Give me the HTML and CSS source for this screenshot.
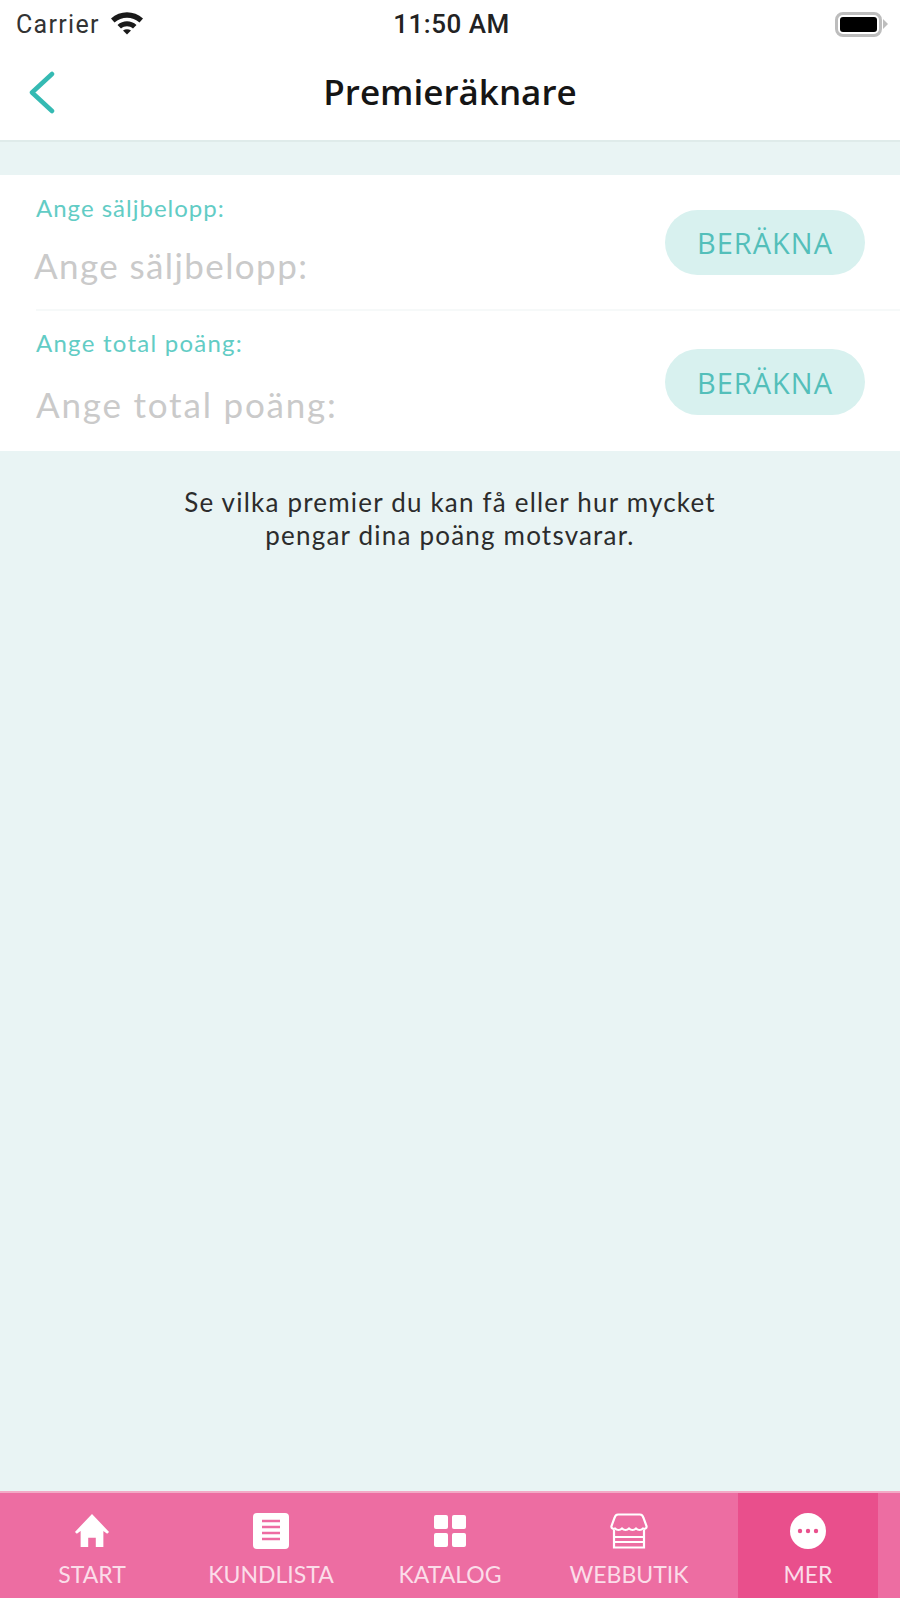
FILE: index.html
```html
<!DOCTYPE html>
<html lang="sv">
<head>
    <meta charset="UTF-8">
    <meta name="viewport" content="width=device-width, initial-scale=1.0">
    <title>Premieräknare</title>
    <link rel="stylesheet" href="styles.css">
</head>
<body>
    <div class="app">
        <header class="top">
            <div class="status-bar">
                <div class="status-left">
                    <span>Carrier</span>
                    <svg class="wifi" width="34" height="25" viewBox="0 0 34 25">
                        <path d="M1 8.500C10 0 24 0 33 8.500L29.500 12.500C22.500 6 11.500 6 4.500 12.500Z" fill="#1a1a1a"/>
                        <path d="M7.500 15C13 10 21 10 26.500 15L23 18.500C19.500 15.500 14.500 15.500 11 18.500Z" fill="#1a1a1a"/>
                        <path d="M13 20.500C15.500 18.700 18.500 18.700 21 20.500L17 24.500Z" fill="#1a1a1a"/>
                    </svg>
                </div>
                <div class="status-time">11:50 AM</div>
                <div class="status-right">
                    <div class="battery"><div class="battery-fill"></div></div>
                    <div class="battery-tip"></div>
                </div>
            </div>
            <div class="nav-bar">
                <svg class="back" width="28" height="44" viewBox="0 0 28 44">
                    <path d="M24 4L4 22.500L24 41" fill="none" stroke="#35bab3" stroke-width="4.500" stroke-linecap="round" stroke-linejoin="round"/>
                </svg>
                <h1 class="nav-title">Premieräknare</h1>
            </div>
        </header>

        <main class="content">
            <section class="form-card">
                <div class="form-row form-row-first">
                    <div class="field">
                        <div class="field-label">Ange säljbelopp:</div>
                        <div class="field-input">Ange säljbelopp:</div>
                    </div>
                    <button class="calc-button">BERÄKNA</button>
                </div>
                <div class="form-row form-row-second">
                    <div class="field">
                        <div class="field-label">Ange total poäng:</div>
                        <div class="field-input">Ange total poäng:</div>
                    </div>
                    <button class="calc-button">BERÄKNA</button>
                </div>
            </section>
            <p class="info-text">Se vilka premier du kan få eller hur mycket<br>pengar dina poäng motsvarar.</p>
        </main>

        <nav class="tab-bar">
            <div class="tab">
                <svg width="38" height="38" viewBox="0 0 38 38">
                    <path d="M19 1L37 20L35 22L31 19V36H23V26H15V36H7V19L3 22L1 20Z" fill="#fff"/>
                </svg>
                <span>START</span>
            </div>
            <div class="tab">
                <svg width="36" height="36" viewBox="0 0 36 36">
                    <rect width="36" height="36" rx="4" fill="#fff"/>
                    <path d="M9 8H27M9 14H27M9 20H27M9 26H27" stroke="#ee6ca3" stroke-width="2.500"/>
                </svg>
                <span>KUNDLISTA</span>
            </div>
            <div class="tab">
                <svg width="34" height="34" viewBox="0 0 34 34">
                    <rect x="1" y="1" width="14" height="14" rx="2" fill="#fff"/>
                    <rect x="19" y="1" width="14" height="14" rx="2" fill="#fff"/>
                    <rect x="1" y="19" width="14" height="14" rx="2" fill="#fff"/>
                    <rect x="19" y="19" width="14" height="14" rx="2" fill="#fff"/>
                </svg>
                <span>KATALOG</span>
            </div>
            <div class="tab">
                <svg width="38" height="36" viewBox="0 0 38 36" fill="none" stroke="#fff" stroke-width="2.200">
                    <path d="M8 1.500H30C32 1.500 33 3 33.500 5L36.500 13C37 15 35 16.500 33 15.500C31 17.500 28 17.500 26 15.500C24 17.500 21 17.500 19 15.500C17 17.500 14 17.500 12 15.500C10 17.500 7 17.500 5 15.500C3 16.500 1 15 1.500 13L4.500 5C5 3 6 1.500 8 1.500Z"/>
                    <path d="M4 17V34.500H34V17M4 24H34M4 29H34"/>
                </svg>
                <span>WEBBUTIK</span>
            </div>
            <div class="tab tab-active">
                <svg width="36" height="36" viewBox="0 0 36 36">
                    <circle cx="18" cy="18" r="18" fill="#fff"/>
                    <circle cx="10" cy="18" r="2.200" fill="#e94f8c"/>
                    <circle cx="18" cy="18" r="2.200" fill="#e94f8c"/>
                    <circle cx="26" cy="18" r="2.200" fill="#e94f8c"/>
                </svg>
                <span>MER</span>
            </div>
        </nav>
    </div>
</body>
</html>
```

FILE: styles.css
```css
* {
    box-sizing: border-box;
}
html, body {
    margin: 0;
    padding: 0;
}
body {
    background-color: #E9F4F4;
    font-family: Lato, "Open Sans", sans-serif;
}
.app {
    width: 900px;
    height: 1598px;
    display: flex;
    flex-direction: column;
}
.top {
    background-color: white;
    height: 142px;
    border-bottom: 2px solid #DFEBEA;
}
.status-bar {
    height: 48px;
    padding: 0 12px 0 16px;
    display: flex;
    align-items: center;
    justify-content: space-between;
    font-family: Roboto, sans-serif;
    font-size: 25px;
    letter-spacing: 1.3px;
    color: #333;
}
.status-left {
    width: 200px;
    display: flex;
    align-items: center;
    gap: 10px;
}
.wifi {
    margin-top: -3px;
}
.status-time {
    font-size: 26px;
    font-weight: 500;
    color: #222;
    letter-spacing: 0.5px;
    margin-left: -1px;
}
.status-right {
    width: 200px;
    display: flex;
    align-items: center;
    justify-content: flex-end;
}
.battery {
    width: 47px;
    height: 25px;
    border: 3px solid #BDBDBD;
    border-radius: 8px;
    padding: 2px;
}
.battery-fill {
    height: 100%;
    background-color: black;
    border-radius: 3px;
}
.battery-tip {
    width: 0;
    height: 0;
    border-left: 5px solid #BDBDBD;
    border-top: 5px solid transparent;
    border-bottom: 5px solid transparent;
    margin-left: 1px;
}
.nav-bar {
    height: 92px;
    position: relative;
    display: flex;
    align-items: center;
    justify-content: center;
}
.back {
    position: absolute;
    left: 28px;
    top: 22px;
}
.nav-title {
    margin: 0 0 6px;
    font-family: "Open Sans", sans-serif;
    font-size: 35px;
    font-weight: 600;
    color: #151515;
}
.content {
    flex: 1;
    padding-top: 33px;
}
.form-card {
    background-color: white;
    height: 276px;
    padding-left: 36px;
}
.form-row {
    display: flex;
    align-items: flex-start;
    justify-content: space-between;
    padding-right: 35px;
    padding-top: 20px;
}
.form-row-first {
    height: 136px;
    border-bottom: 2px solid #F6F9F9;
}
.field-label {
    font-size: 24px;
    line-height: 26px;
    color: #62CCC5;
    letter-spacing: 1px;
}
.field-input {
    font-size: 35px;
    line-height: 44px;
    margin-top: 22px;
    color: #CACACA;
    letter-spacing: 1.4px;
}
.form-row-first .field-input {
    margin-left: -2px;
}
.form-row-second {
    padding-top: 19px;
}
.form-row-second .field-label {
    letter-spacing: 1.25px;
}
.form-row-second .field-input {
    margin-top: 26px;
    letter-spacing: 1.8px;
}
.calc-button {
    width: 200px;
    height: 65px;
    margin-top: 15px;
    border: none;
    border-radius: 33px;
    background-color: #D8F1EF;
    color: #53BFBA;
    font-family: "Open Sans", sans-serif;
    font-size: 29px;
    letter-spacing: 1px;
    cursor: pointer;
}
.form-row-second .calc-button {
    height: 66px;
    margin-top: 19px;
}
.info-text {
    margin: 35px 0 0;
    text-align: center;
    font-size: 26px;
    line-height: 33px;
    color: #2C2C2C;
    letter-spacing: 1.2px;
}
.tab-bar {
    height: 107px;
    background-color: #ED6DA2;
    border-top: 2px solid #F3A9C6;
    display: flex;
    padding: 0 22px;
    justify-content: space-between;
}
.tab {
    width: 140px;
    display: flex;
    flex-direction: column;
    align-items: center;
    color: #FBDDE9;
    font-size: 23px;
    padding-top: 20px;
}
.tab svg {
    height: 36px;
}
.tab span {
    margin-top: 11px;
    white-space: nowrap;
}
.tab-active {
    background-color: #E94F8C;
}
```
